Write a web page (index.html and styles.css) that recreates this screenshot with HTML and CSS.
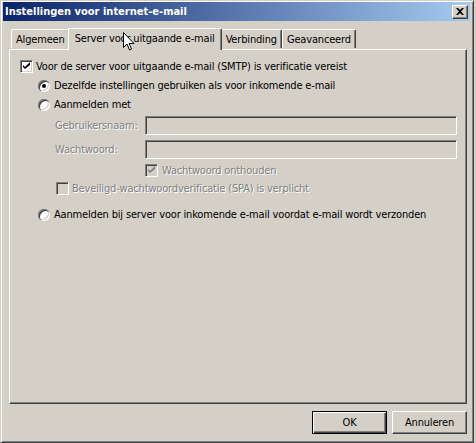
FILE: index.html
```html
<!DOCTYPE html>
<html lang="nl">
<head>
    <meta charset="UTF-8">
    <title>Instellingen voor internet-e-mail</title>
    <link rel="stylesheet" href="styles.css">
</head>
<body>
    <div class="window">
        <div class="titlebar">
            <span class="title">Instellingen voor internet-e-mail</span>
            <span class="close">
                <svg width="8" height="7" viewBox="0 0 8 7"><path d="M0 0h2l2 2 2-2h2L5 3.5 8 7H6L4 5 2 7H0l3-3.5z" fill="#000"/></svg>
            </span>
        </div>

        <div class="tabs">
            <div class="tab">Algemeen</div>
            <div class="tab active">Server voor uitgaande e-mail</div>
            <div class="tab">Verbinding</div>
            <div class="tab">Geavanceerd</div>
        </div>

        <div class="panel">
            <div class="row row-main">
                <span class="check checked"></span>
                <span>Voor de server voor uitgaande e-mail (SMTP) is verificatie vereist</span>
            </div>
            <div class="row row-sub">
                <span class="radio selected"></span>
                <span>Dezelfde instellingen gebruiken als voor inkomende e-mail</span>
            </div>
            <div class="row row-sub">
                <span class="radio"></span>
                <span>Aanmelden met</span>
            </div>
            <div class="field first">
                <span class="label disabled">Gebruikersnaam:</span>
                <span class="input"></span>
            </div>
            <div class="field">
                <span class="label disabled">Wachtwoord:</span>
                <span class="input"></span>
            </div>
            <div class="row row-remember">
                <span class="check checked off"></span>
                <span class="disabled">Wachtwoord onthouden</span>
            </div>
            <div class="row row-spa">
                <span class="check off"></span>
                <span class="disabled">Beveiligd-wachtwoordverificatie (SPA) is verplicht</span>
            </div>
            <div class="row row-sub row-last">
                <span class="radio"></span>
                <span>Aanmelden bij server voor inkomende e-mail voordat e-mail wordt verzonden</span>
            </div>
        </div>

        <div class="buttons">
            <div class="button default">OK</div>
            <div class="button">Annuleren</div>
        </div>

        <svg class="cursor" width="12" height="20" viewBox="0 0 12 20">
            <path d="M0.5 0.5v15l3.5-3.5 2.5 6 2-1-2.5-5.5h5z" fill="#fff" stroke="#000" stroke-width="1"/>
        </svg>
    </div>
</body>
</html>
```

FILE: styles.css
```css
* {
    margin: 0;
    padding: 0;
    box-sizing: border-box;
}
body {
    background-color: #d4d0c8;
    font-family: "DejaVu Sans Condensed", "DejaVu Sans", sans-serif;
    font-size: 11px;
    letter-spacing: -0.17px;
    color: #000;
}
.window {
    position: relative;
    width: 474px;
    height: 443px;
    border: 1px solid;
    border-color: #d4d0c8 #404040 #404040 #d4d0c8;
    box-shadow: inset 1px 1px 0 #fff, inset -1px -1px 0 #808080;
    padding: 1px 3px 0 2px;
}
.titlebar {
    height: 19px;
    background: linear-gradient(to right, #0a246a, #a6caf0);
    color: white;
    display: flex;
    align-items: center;
    justify-content: space-between;
    padding: 0 2px 0 2px;
}
.title {
    font-weight: bold;
    font-size: 11px;
    letter-spacing: 0;
}
.close {
    width: 16px;
    height: 14px;
    background: #d4d0c8;
    border: 1px solid;
    border-color: #fff #404040 #404040 #fff;
    box-shadow: inset -1px -1px 0 #808080;
    display: flex;
    align-items: center;
    justify-content: center;
}
.tabs {
    display: flex;
    align-items: flex-end;
    height: 24px;
    margin-top: 4px;
    padding-left: 8px;
    position: relative;
    z-index: 1;
}
.tab {
    height: 19px;
    padding: 0 4px;
    margin-bottom: 1px;
    border: 1px solid;
    border-color: #fff #404040 transparent #fff;
    border-bottom: none;
    border-radius: 2px 2px 0 0;
    box-shadow: inset -1px 0 0 #808080;
    display: flex;
    align-items: center;
    background: #d4d0c8;
}
.tab.active {
    height: 22px;
    margin: 0 -2px -1px -2px;
    padding: 0 6px 2px 6px;
    position: relative;
    z-index: 2;
}
.tab.active + .tab {
    margin-left: 1px;
}
.panel {
    margin-left: 6px;
    width: 458px;
    height: 355px;
    border: 1px solid;
    border-color: #fff #404040 #404040 #fff;
    box-shadow: inset -1px -1px 0 #808080;
    padding-top: 10px;
}
.row {
    display: flex;
    align-items: center;
    height: 13px;
}
.row-main {
    padding-left: 10px;
    gap: 3px;
}
.row-sub {
    padding-left: 28px;
    gap: 4px;
    margin-top: 6px;
}
.row-last {
    margin-top: 13px;
}
.check {
    width: 13px;
    height: 13px;
    background: #fff;
    border: 1px solid;
    border-color: #808080 #fff #fff #808080;
    box-shadow: inset 1px 1px 0 #404040, inset -1px -1px 0 #d4d0c8;
    display: inline-block;
    position: relative;
}
.check.off {
    background: #d4d0c8;
}
.check.checked::after {
    content: "";
    position: absolute;
    left: 2px;
    top: 1px;
    width: 7px;
    height: 7px;
    background: linear-gradient(#000, #000) no-repeat;
    clip-path: polygon(0 43%, 28% 71%, 100% 0, 100% 43%, 28% 100%, 0 71%);
}
.check.checked.off::after {
    background: #808080;
}
.radio {
    width: 12px;
    height: 12px;
    border-radius: 50%;
    background: #fff;
    box-shadow: inset 1px 1px 0 #808080, inset 2px 2px 0 #404040, inset -1px -1px 0 #fff, inset -2px -2px 0 #d4d0c8;
    position: relative;
    display: inline-block;
}
.radio.selected::after {
    content: "";
    position: absolute;
    left: 4px;
    top: 4px;
    width: 4px;
    height: 4px;
    border-radius: 50%;
    background: #000;
}
.field {
    display: flex;
    align-items: center;
    padding-left: 45px;
    height: 19px;
    margin-top: 5px;
}
.field.first {
    margin-top: 5px;
}
.label {
    width: 90px;
}
.input {
    width: 312px;
    height: 19px;
    border: 1px solid;
    border-color: #808080 #fff #fff #808080;
    box-shadow: inset 1px 1px 0 #404040, inset -1px -1px 0 #d4d0c8;
}
.disabled {
    color: #808080;
    text-shadow: 1px 1px 0 #fff;
}
.row-remember {
    padding-left: 135px;
    gap: 4px;
    margin-top: 5px;
}
.row-spa {
    padding-left: 46px;
    gap: 3px;
    margin-top: 5px;
}
.buttons {
    display: flex;
    justify-content: flex-end;
    gap: 5px;
    width: 464px;
    margin-top: 7px;
}
.button {
    width: 75px;
    height: 23px;
    border: 1px solid;
    border-color: #fff #404040 #404040 #fff;
    box-shadow: inset -1px -1px 0 #808080;
    display: flex;
    align-items: center;
    justify-content: center;
}
.button.default {
    border: 1px solid #000;
    box-shadow: inset 1px 1px 0 #fff, inset -1px -1px 0 #404040, inset -2px -2px 0 #808080;
}
.cursor {
    position: absolute;
    left: 122px;
    top: 31px;
    z-index: 5;
}
```
